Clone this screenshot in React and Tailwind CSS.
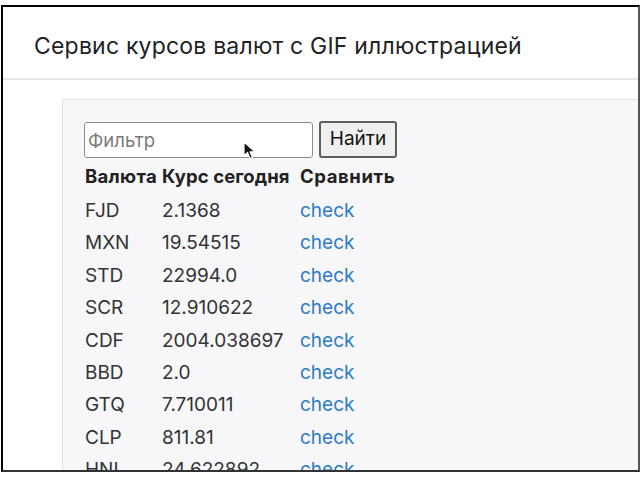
const rows = [
  ['FJD', '2.1368'],
  ['MXN', '19.54515'],
  ['STD', '22994.0'],
  ['SCR', '12.910622'],
  ['CDF', '2004.038697'],
  ['BBD', '2.0'],
  ['GTQ', '7.710011'],
  ['CLP', '811.81'],
  ['HNL', '24.622892'],
];

const Cursor = () => (
  <svg className="absolute left-[243px] top-[141px]" width="14" height="20" viewBox="0 0 14 20">
    <path d="M1 1 L1 15 L4.5 11.5 L7 17.5 L9.5 16.5 L7 10.8 L12 10.8 Z" fill="#111" stroke="#fff" strokeWidth="1.2" strokeLinejoin="round" />
  </svg>
);

const App = () => {
  return (
    <div className="w-[640px] h-[480px] bg-white overflow-hidden relative" style={{ fontFamily: 'Inter, "Liberation Sans", sans-serif' }}>
      <div className="ml-[1px] mt-[5px] w-[639px] h-[467px] border-t-2 border-l-2 border-b-2 border-r-2 border-t-black border-l-black border-b-[#333] border-r-[#555] overflow-hidden flex flex-col">
        <div className="h-[73px] shrink-0 bg-white border-b-2 border-[#e6e6e6] shadow-[0_1px_2px_rgba(0,0,0,0.06)] flex items-center pl-[31px] pt-[8px]">
          <h1 className="text-[23px] text-[#222] tracking-[0.2px]">Сервис курсов валют с GIF иллюстрацией</h1>
        </div>
        <div className="flex-1 bg-white pl-[59px] pt-[19px]">
          <div className="h-full bg-[#f7f7f9] border-l border-t border-[#e4e4e6] pl-[21px] pt-[21px]">
            <div className="flex items-center gap-[6px]">
              <input
                placeholder="Фильтр"
                className="w-[229px] h-[36px] bg-white border border-[#8d8d8d] rounded-[3px] px-[3px] text-[18.5px] text-[#222] placeholder:text-[#7a7a7a] outline-none"
              />
              <button className="w-[78px] h-[37px] bg-[#efefef] border-2 border-[#5f5f5f] rounded-[3px] text-[19px] text-[#111] flex items-center justify-center">
                Найти
              </button>
            </div>
            <div className="grid grid-cols-[77px_138px_auto] pl-[1px] text-[19px] text-[#333]">
              <div className="h-[37px] flex items-center font-bold text-[18.5px] text-[#222] pt-[1px] tracking-[0.3px]">Валюта</div>
              <div className="h-[37px] flex items-center font-bold text-[18.5px] text-[#222] pt-[1px] tracking-[0.1px]">Курс сегодня</div>
              <div className="h-[37px] flex items-center font-bold text-[18.5px] text-[#222] pt-[1px] tracking-[0.6px]">Сравнить</div>
              {rows.map(([code, rate]) => (
                <div key={code} className="contents">
                  <div className="h-[32.4px] flex items-center">{code}</div>
                  <div className="h-[32.4px] flex items-center">{rate}</div>
                  <div className="h-[32.4px] flex items-center">
                    <a className="text-[#2b7bc4]">check</a>
                  </div>
                </div>
              ))}
            </div>
          </div>
        </div>
      </div>
      <Cursor />
    </div>
  );
};

export default App;
